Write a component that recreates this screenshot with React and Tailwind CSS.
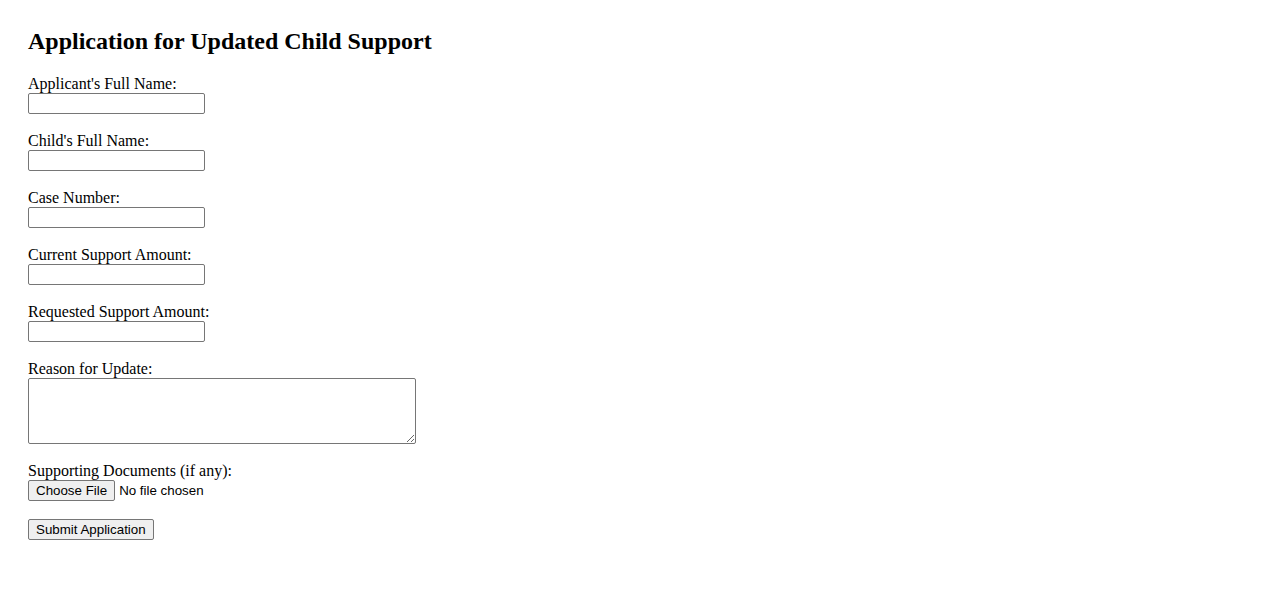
import React, { useState } from 'react';

const fields = [
  { id: 'applicant', label: "Applicant's Full Name:" },
  { id: 'child', label: "Child's Full Name:" },
  { id: 'case', label: 'Case Number:' },
  { id: 'current', label: 'Current Support Amount:' },
  { id: 'requested', label: 'Requested Support Amount:' },
];

const inputCls =
  'block w-[177px] h-[21px] border border-[#767676] rounded-[2px] px-[2px] bg-white text-[13.33px] font-["Liberation_Sans",Arial,sans-serif] outline-none';

const btnCls =
  'flex items-center h-[21px] px-[7px] border border-[#767676] rounded-[2px] bg-[#efefef] text-[13.33px] text-black font-["Liberation_Sans",Arial,sans-serif] leading-none';

export default function App() {
  const [fileName, setFileName] = useState('');

  return (
    <div className='min-h-screen bg-white text-black pl-[28px] pt-[27px] font-["Liberation_Serif","Times_New_Roman",serif]'>
      <h2 className="text-[24px] font-bold leading-[28px] mb-[20px]">
        Application for Updated Child Support
      </h2>

      <form onSubmit={(e) => e.preventDefault()}>
        {fields.map((f) => (
          <div key={f.id} className="mb-[18px]">
            <label htmlFor={f.id} className="block text-[16px] leading-[18px]">
              {f.label}
            </label>
            <input id={f.id} type="text" className={inputCls} />
          </div>
        ))}

        <div className="mb-[18px]">
          <label htmlFor="reason" className="block text-[16px] leading-[18px]">
            Reason for Update:
          </label>
          <textarea
            id="reason"
            className='block w-[388px] h-[66px] border border-[#767676] rounded-[2px] p-[2px] bg-white text-[13.33px] font-["Liberation_Mono",monospace] outline-none'
          />
        </div>

        <div className="mb-[18px]">
          <div className="text-[16px] leading-[18px]">Supporting Documents (if any):</div>
          <label className="flex items-center h-[21px] cursor-default">
            <span className={btnCls}>Choose File</span>
            <span className='ml-[4px] text-[13.33px] font-["Liberation_Sans",Arial,sans-serif]'>
              {fileName || 'No file chosen'}
            </span>
            <input
              type="file"
              className="hidden"
              onChange={(e) => setFileName(e.target.files[0]?.name || '')}
            />
          </label>
        </div>

        <button type="submit" className={btnCls}>
          Submit Application
        </button>
      </form>
    </div>
  );
}
